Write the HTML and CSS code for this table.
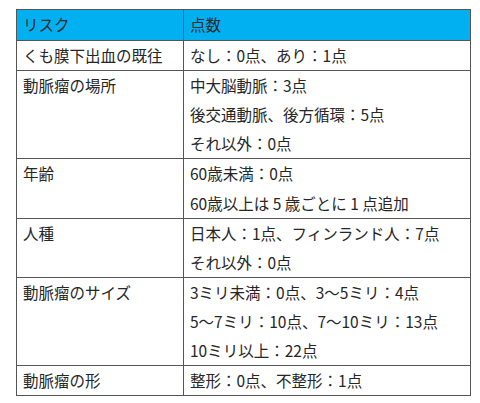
FILE: index.html
```html
<!DOCTYPE html>
<html lang="ja">
<head>
<meta charset="utf-8">
<link rel="stylesheet" href="styles.css">
</head>
<body>
<table class="risk">
  <thead>
    <tr><th class="c1"><div class="ln">リスク</div></th><th class="c2"><div class="ln">点数</div></th></tr>
  </thead>
  <tbody>
    <tr><td><div class="ln">くも膜下出血の既往</div></td><td><div class="ln">なし：0点、あり：1点</div></td></tr>
    <tr><td><div class="ln">動脈瘤の場所</div></td><td><div class="ln">中大脳動脈：3点</div><div class="ln">後交通動脈、後方循環：5点</div><div class="ln">それ以外：0点</div></td></tr>
    <tr class="r30"><td><div class="ln">年齢</div></td><td><div class="ln">60歳未満：0点</div><div class="ln">60歳以上は 5 歳ごとに 1 点追加</div></td></tr>
    <tr><td><div class="ln">人種</div></td><td><div class="ln">日本人：1点、フィンランド人：7点</div><div class="ln">それ以外：0点</div></td></tr>
    <tr><td><div class="ln">動脈瘤のサイズ</div></td><td><div class="ln">3ミリ未満：0点、3〜5ミリ：4点</div><div class="ln">5〜7ミリ：10点、7〜10ミリ：13点</div><div class="ln">10ミリ以上：22点</div></td></tr>
    <tr><td><div class="ln">動脈瘤の形</div></td><td><div class="ln">整形：0点、不整形：1点</div></td></tr>
  </tbody>
</table>
</body>
</html>
```
FILE: styles.css
```css
html, body {
  margin: 0;
  padding: 0;
  background: #ffffff;
}
body {
  padding: 9px 0 0 16px;
  font-family: "Noto Sans CJK JP", "Noto Sans", sans-serif;
  font-size: 15.5px;
  color: #262626;
}
.risk {
  border-collapse: collapse;
  width: 455px;
  table-layout: fixed;
}
.risk th, .risk td {
  border: 1px solid #555555;
  padding: 0 6px;
  vertical-align: top;
  text-align: left;
  font-weight: normal;
}
.risk th {
  background: #00b0f0;
  color: #2b2b2b;
}
.risk th .ln {
  height: 30px;
}
.risk .c1 {
  width: 154px;
}
.ln {
  height: 29px;
  line-height: 29px;
  white-space: nowrap;
}
.r30 .ln {
  height: 29.5px;
}
```
